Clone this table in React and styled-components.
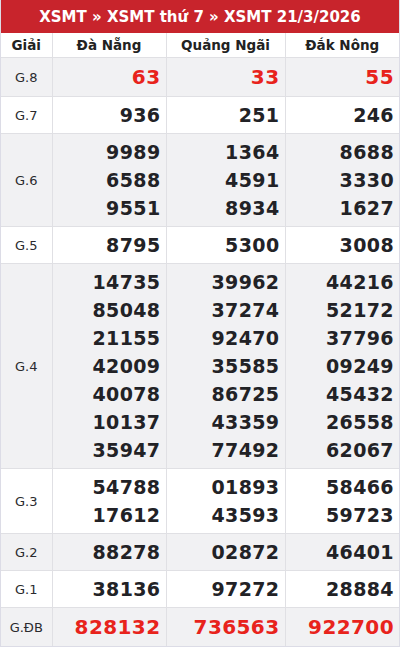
import React from "react";
import styled, { createGlobalStyle } from "styled-components";

const GlobalStyle = createGlobalStyle`
  html, body {
    margin: 0;
    padding: 0;
    background: #ffffff;
    font-family: "DejaVu Sans", "Liberation Sans", sans-serif;
  }
`;

const PROVINCES = ["Đà Nẵng", "Quảng Ngãi", "Đắk Nông"];

const PRIZES = [
  { label: "G.8", red: true, values: [["63"], ["33"], ["55"]] },
  { label: "G.7", values: [["936"], ["251"], ["246"]] },
  {
    label: "G.6",
    values: [
      ["9989", "6588", "9551"],
      ["1364", "4591", "8934"],
      ["8688", "3330", "1627"],
    ],
  },
  { label: "G.5", values: [["8795"], ["5300"], ["3008"]] },
  {
    label: "G.4",
    values: [
      ["14735", "85048", "21155", "42009", "40078", "10137", "35947"],
      ["39962", "37274", "92470", "35585", "86725", "43359", "77492"],
      ["44216", "52172", "37796", "09249", "45432", "26558", "62067"],
    ],
  },
  {
    label: "G.3",
    values: [
      ["54788", "17612"],
      ["01893", "43593"],
      ["58466", "59723"],
    ],
  },
  { label: "G.2", values: [["88278"], ["02872"], ["46401"]] },
  { label: "G.1", values: [["38136"], ["97272"], ["28884"]] },
  { label: "G.ĐB", red: true, values: [["828132"], ["736563"], ["922700"]] },
];

export default function App() {
  return (
    <>
      <GlobalStyle />
      <Wrapper>
        <Title>XSMT » XSMT thứ 7 » XSMT 21/3/2026</Title>
        <Table>
          <colgroup>
            <col style={{ width: 51 }} />
            <col style={{ width: 114 }} />
            <col style={{ width: 119 }} />
            <col style={{ width: 114 }} />
          </colgroup>
          <thead>
            <tr>
              <HeadCell>Giải</HeadCell>
              {PROVINCES.map((p) => (
                <HeadCell key={p}>{p}</HeadCell>
              ))}
            </tr>
          </thead>
          <tbody>
            {PRIZES.map((prize, i) => (
              <Row key={prize.label} $shaded={i % 2 === 0}>
                <LabelCell>{prize.label}</LabelCell>
                {prize.values.map((col, j) => (
                  <NumberCell key={j} $red={prize.red}>
                    {col.map((n) => (
                      <Number key={n} $red={prize.red}>
                        {n}
                      </Number>
                    ))}
                  </NumberCell>
                ))}
              </Row>
            ))}
          </tbody>
        </Table>
      </Wrapper>
    </>
  );
}

const Wrapper = styled.div`
  width: 400px;
  height: 647px;
  box-sizing: border-box;
  border: 1px solid #dcdce6;
  border-top: none;
  overflow: hidden;
`;

const Title = styled.div`
  height: 33px;
  margin: 0 -1px;
  background: #c8242c;
  color: #ffffff;
  font-size: 15px;
  font-weight: 700;
  display: flex;
  align-items: center;
  justify-content: center;
`;

const Table = styled.table`
  width: 398px;
  border-collapse: collapse;
  table-layout: fixed;
`;

const HeadCell = styled.th`
  height: 24px;
  padding: 0;
  font-size: 13.5px;
  font-weight: 700;
  color: #222;
  text-align: center;
  border: 1px solid #e0e0e4;
  border-top: none;
  &:first-child {
    border-left: none;
  }
  &:last-child {
    border-right: none;
  }
`;

const Row = styled.tr`
  background: ${(p) => (p.$shaded ? "#f1f1f3" : "#ffffff")};
`;

const LabelCell = styled.td`
  padding: 0;
  font-size: 13px;
  color: #2a2a2e;
  text-align: center;
  border: 1px solid #e0e0e4;
  border-left: none;
`;

const NumberCell = styled.td`
  padding: ${(p) => (p.$red ? "5px" : "4px")} 5px;
  text-align: right;
  border: 1px solid #e0e0e4;
  vertical-align: middle;
  &:last-child {
    border-right: none;
  }
`;

const Number = styled.div`
  font-size: ${(p) => (p.$red ? "20px" : "19px")};
  line-height: 28px;
  font-weight: 700;
  letter-spacing: 0.4px;
  color: ${(p) => (p.$red ? "#e8231c" : "#222226")};
`;
